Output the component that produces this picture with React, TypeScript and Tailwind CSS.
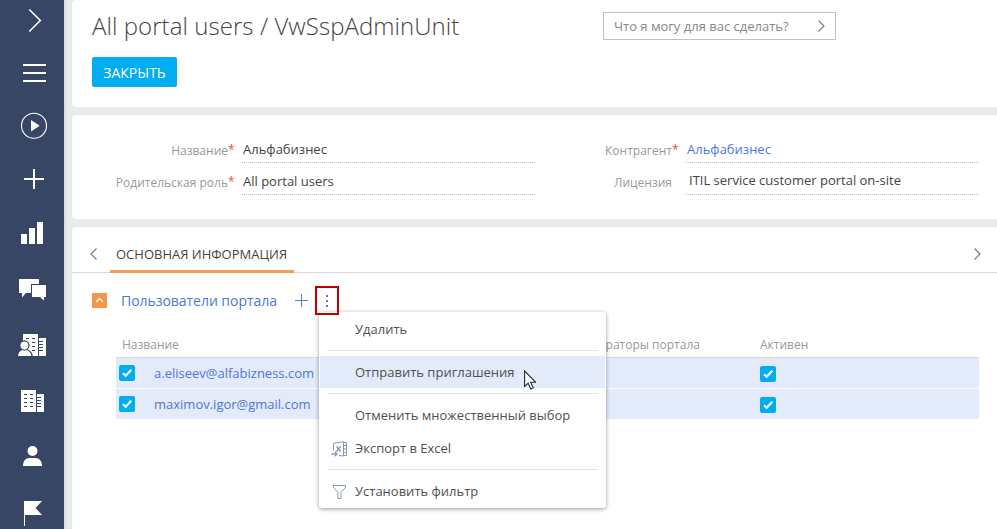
import type { ReactNode } from "react";

const Slot = ({ children }: { children: ReactNode }) => (
  <svg className="h-[54px] w-16 shrink-0" viewBox="0 0 64 54" fill="#fff">
    {children}
  </svg>
);

const Sidebar = () => (
  <nav className="flex w-16 shrink-0 flex-col bg-[#384665]">
    <svg className="h-[46px] w-16 shrink-0" viewBox="0 0 64 46" fill="none" stroke="#fff" strokeWidth="1.6">
      <path d="M29.3 9.5 40.3 20.5 29.3 31.5" />
    </svg>
    <Slot>
      <path d="M23 18h23v2H23zM23 26h23v2H23zM23 34h23v2H23z" />
    </Slot>
    <Slot>
      <circle cx="34" cy="25.7" r="12.5" fill="none" stroke="#fff" strokeWidth="1.1" />
      <path d="M31 20v11.5l8.7-5.7z" />
    </Slot>
    <Slot>
      <path d="M24 24h20v2H24z" />
      <path d="M33 15h2v20h-2z" />
    </Slot>
    <Slot>
      <path d="M21 26h6v10h-6zM29 20h6v16h-6zM37 14h6v22h-6z" />
    </Slot>
    <Slot>
      <path d="M19 17h20v5h-8v9h-5l-4 4.5V31h-3z" />
      <path d="M32 23h14v12h-2v3.5L40 35h-8z" />
    </Slot>
    <Slot>
      <path d="M23 18h15v22H23zM39 22h7v18h-7z" />
      <path fill="#384665" d="M26 22h3v1h-3zM32 22h3v1h-3zM32 26h3v1h-3zM32 30h3v1h-3zM32 34h3v1h-3zM39 25h4v1h-4zM39 28h4v1h-4zM39 31h4v1h-4zM39 34h4v1h-4z" />
      <path fill="#384665" d="M24.3 24.2a5.3 5.3 0 0 1 3.3 9.4c3 1 5 3.5 5.4 6.9H17V34l2-4.500a5.300 5.300 0 0 1 5.300-5.300z" />
      <circle cx="24.4" cy="29.5" r="3.9" />
      <path d="M18 40c.3-3.5 2-5.4 4.5-6 1.2.7 2.600.7 3.800 0 2.500.6 4.900 2.500 5.200 6z" />
    </Slot>
    <Slot>
      <path d="M21 20h15v22H21zM37 24h7v18h-7z" />
      <path fill="#384665" d="M24 24h3v1h-3zM30 24h3v1h-3zM24 28h3v1h-3zM30 28h3v1h-3zM24 32h3v1h-3zM30 32h3v1h-3zM24 36h3v1h-3zM30 36h3v1h-3zM37 27h4v1h-4zM37 30h4v1h-4zM37 33h4v1h-4zM37 36h4v1h-4z" />
    </Slot>
    <Slot>
      <circle cx="32.500" cy="27" r="5" />
      <path d="M23 42c0-5 2.500-8 6.500-8h5.500c4.500 0 7 3 7 8z" />
    </Slot>
    <Slot>
      <path d="M24 23h18l-6.500 7L42 37H25v11h-1z" />
    </Slot>
  </nav>
);

const Chevron = ({ left = false }: { left?: boolean }) => (
  <svg className="h-3 w-[7px]" viewBox="0 0 7 12" fill="none" stroke="#777" strokeWidth="1.1">
    <path d={left ? "M6.500.5 1 6l5.500 5.500" : "M.5.5 6 6 .5 11.500"} />
  </svg>
);

const Check = () => (
  <span className="flex size-4 items-center justify-center rounded-[2px] bg-[#00aeef]">
    <svg className="size-4" viewBox="0 0 16 16" fill="none" stroke="#fff" strokeWidth="2.200">
      <path d="m4 8.300 2.700 2.500L12.300 4.800" />
    </svg>
  </span>
);

const Label = ({ text, required = true }: { text: string; required?: boolean }) => (
  <span className="flex justify-end pt-[3px] text-[12px] leading-4 text-[#999]">
    {text}
    <span className="-mt-px w-[7px] text-[12px] text-[#ef4b3f]">{required ? "*" : ""}</span>
  </span>
);

const MenuIcon = ({ kind }: { kind?: "excel" | "filter" }) => (
  <svg className="mr-[7px] ml-[11px] h-4 w-[17px]" viewBox="0 0 17 16" fill="none" stroke="#8299bd" strokeWidth="1">
    {kind === "excel" && (
      <>
        <path d="M2.500 9V2.200L12.500.8v14.200L8 14.500M12.500 1.500h3v13h-3M12.500 4.500h3M12.500 8h3M12.500 11.300h3" />
        <path d="m5.500 5.500 4 5m0-5-4 5" strokeWidth="1.400" />
        <path d="M.3 13h5.500M3.800 10.800 6 13l-2.200 2.200" strokeWidth="1.300" />
      </>
    )}
    {kind === "filter" && <path d="M2.500 1.500h12v2L10 8.500v6H7v-6L2.500 3.500z" />}
  </svg>
);

const MenuItem = ({ text, kind, active = false }: { text: string; kind?: "excel" | "filter"; active?: boolean }) => (
  <div className={active ? "flex h-8 items-center bg-[#e3eafa] pt-[2px]" : "flex h-8 items-center pt-[2px]"}>
    <MenuIcon kind={kind} />
    <span>{text}</span>
  </div>
);

export default function App() {
  return (
    <div className="flex h-[529px] w-[997px] overflow-hidden bg-[#e8ecec] font-['Open_Sans',sans-serif] text-[13px] text-[#444]">
      <Sidebar />
      <main className="flex min-w-0 flex-1 flex-col gap-2 pl-2 shadow-[inset_2px_0_2px_#d9dddd]">
        <header className="flex h-[107px] shrink-0 items-start justify-between rounded-l-[3px] bg-white pl-5 shadow-[0_0_1px_#ccc]">
          <div>
            <h1 className="mt-[8px] text-[24px] leading-9 font-light tracking-[0.06px] whitespace-nowrap">All portal users / VwSspAdminUnit</h1>
            <button className="mt-[13px] h-[30px] w-[85px] rounded-[2px] bg-[#00aeef] pt-[2px] text-[14px] leading-7 text-white">ЗАКРЫТЬ</button>
          </div>
          <div className="mt-3 mr-[161px] flex h-7 w-[233px] items-center justify-between border border-[#c1c1c1] pr-[10px] pl-[10px] text-[#888]">
            <span className="pt-px">Что я могу для вас сделать?</span>
            <Chevron />
          </div>
        </header>

        <section className="grid h-[104px] shrink-0 grid-cols-[163px_300px_144px_300px] grid-rows-[32px_32px] content-start gap-x-0 rounded-l-[3px] bg-white pt-[25px] shadow-[0_0_1px_#ccc]">
          <Label text="Название" />
          <div className="ml-[7px] h-[23px] border-b border-dotted border-[#bbb] pl-px leading-[19px]">Альфабизнес</div>
          <Label text="Контрагент" />
          <div className="ml-[7px] h-[23px] border-b border-dotted border-[#bbb] pl-px leading-[19px] text-[#4d77d9]">Альфабизнес</div>
          <Label text="Родительская роль" />
          <div className="ml-[7px] h-[23px] border-b border-dotted border-[#bbb] pl-px leading-[19px]">All portal users</div>
          <Label text="Лицензия" required={false} />
          <div className="ml-[7px] h-[23px] border-b border-dotted border-[#bbb] pl-[3px] leading-[17px]">ITIL service customer portal on-site</div>
        </section>

        <section className="flex-1 rounded-tl-[3px] bg-white shadow-[0_0_1px_#ccc]">
          <div className="flex h-[46px] items-center border-b border-[#d9d9d9] pl-[18px]">
            <span className="flex pt-[9px]"><Chevron left /></span>
            <div className="relative ml-[13px] h-[45px] w-[184px] pt-[17px] pl-[6px] leading-5 whitespace-nowrap">
              ОСНОВНАЯ ИНФОРМАЦИЯ
              <span className="absolute -bottom-px left-0 h-[3px] w-full bg-[#f59d50]" />
            </div>
            <span className="mr-[16px] ml-auto flex pt-[9px]"><Chevron /></span>
          </div>

          <div className="flex h-[55px] items-center pl-5 text-[#4d77d9]">
            <svg className="h-[15px] w-[15px] rounded-[1px] bg-[#f3964a]" viewBox="0 0 15 15" fill="none" stroke="#fff" strokeWidth="1.300">
              <path d="m4 9 3.500-3.500L11 9" />
            </svg>
            <h2 className="ml-[14px] w-[174px] text-[14px] tracking-[-0.04px] whitespace-nowrap">Пользователи портала</h2>
            <svg className="h-[13px] w-[13px]" viewBox="0 0 13 13" stroke="currentColor"><path d="M0 6.500h13M6.500 0v13" /></svg>
            <div className="relative ml-[7px] flex h-[29px] w-6 items-center justify-center">
              <svg className="h-3 w-[2px]" viewBox="0 0 2 12" fill="currentColor"><path d="M0 0h2v2H0zM0 5h2v2H0zM0 10h2v2H0z" /></svg>
              <span className="absolute inset-0 z-20 border-2 border-[#c00000]" />
              <div className="absolute top-[26px] left-[4px] z-10 w-[287px] rounded-[3px] bg-white px-px pt-px pb-px text-[#505050] shadow-[0_1px_4px_rgba(0,0,0,0.4)]">
                <MenuItem text="Удалить" />
                <div className="mx-[7px] mt-[5px] mb-[5px] border-t border-[#e4e4e4]" />
                <MenuItem text="Отправить приглашения" active />
                <div className="mx-[7px] mt-[5px] mb-[5px] border-t border-[#e4e4e4]" />
                <MenuItem text="Отменить множественный выбор" />
                <div className="pt-px"><MenuItem text="Экспорт в Excel" kind="excel" /></div>
                <div className="mx-[7px] mt-[5px] mb-[5px] border-t border-[#e4e4e4]" />
                <MenuItem text="Установить фильтр" kind="filter" />
                <svg className="absolute top-[58px] left-[205px] h-5 w-3" viewBox="0 0 12 20" fill="#fff" stroke="#22283a" strokeWidth="1.100">
                  <path d="M.6 1v15.500l3.600-3.400 2.500 5.800 2.500-1.100-2.500-5.600h4.900z" />
                </svg>
              </div>
            </div>
          </div>

          <div className="ml-11 w-[863px]">
            <div className="grid h-[30px] grid-cols-[426px_212px_1fr] border-b border-[#d6dade] pl-[6px] text-[12px] leading-[33px] text-[#999]">
              <span>Название</span>
              <span>Администраторы портала</span>
              <span>Активен</span>
            </div>
            {["a.eliseev@alfabizness.com", "maximov.igor@gmail.com"].map((mail) => (
              <div key={mail} className="mb-px flex h-[30px] items-center bg-[#e3eafa] pl-[3px] text-[#4d77d9]">
                <Check />
                <span className="ml-[19px] w-[606px] pt-[2px]">{mail}</span>
                <span className="pt-[2px]"><Check /></span>
              </div>
            ))}
          </div>
        </section>
      </main>
    </div>
  );
}
